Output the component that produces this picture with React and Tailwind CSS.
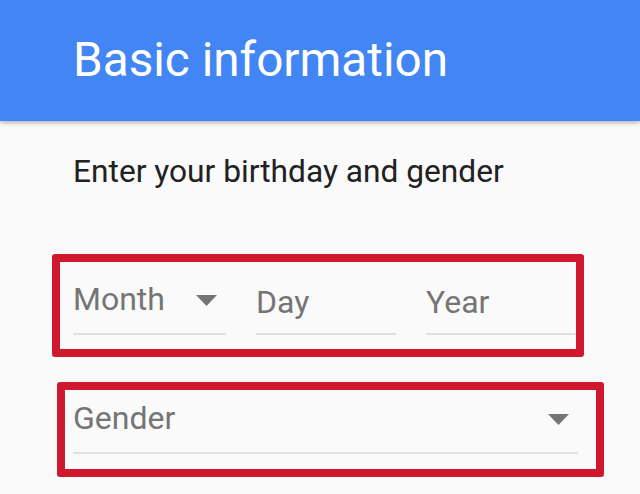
import React from 'react';

function Caret({ className }) {
  return (
    <svg viewBox="0 0 21 11" className={className}>
      <path d="M0 0 L21 0 L10.5 11 Z" fill="#757575" />
    </svg>
  );
}

// label area is 71px tall, underline sits right under it
function Field({ label, width, caret, labelTop }) {
  return (
    <div className={`flex flex-col shrink-0 ${width}`}>
      <div className="relative h-[71px]">
        <span className={`block text-[32px] text-[#757575] leading-none ${labelTop}`}>{label}</span>
        {caret && <Caret className="absolute right-[9px] top-[33px] w-[21px] h-[11px]" />}
      </div>
      <div className="h-[2px] bg-[#e0e0e0]" />
    </div>
  );
}

export default function App() {
  return (
    <div className="w-[640px] h-[494px] overflow-hidden bg-[#fafafa]" style={{ fontFamily: 'Roboto, "Noto Sans", sans-serif' }}>
      <header className="relative z-10 h-[121px] bg-[#4285f4] shadow-[0_2px_4px_rgba(0,0,0,0.28)] pl-[73px] pt-[37px]">
        <h1 className="text-[47.7px] text-white leading-none">Basic information</h1>
      </header>

      <main className="pt-[35px]">
        <p className="ml-[73px] text-[31.7px] text-[#212121] leading-none">Enter your birthday and gender</p>

        {/* Birthday row */}
        <div className="mt-[66px] ml-[52px] w-[532px] h-[103px] border-[8px] border-[#d0192f] rounded-[3px] pl-[13px] overflow-hidden">
          <div className="flex gap-[30px]">
            <Field label="Month" width="w-[153px]" labelTop="pt-[21px]" caret />
            <Field label="Day" width="w-[140px]" labelTop="pt-[24px]" />
            <Field label="Year" width="w-[152px]" labelTop="pt-[24px]" />
          </div>
        </div>

        {/* Gender row */}
        <div className="mt-[25px] ml-[57px] w-[547px] h-[95px] border-[8px] border-[#d0192f] rounded-[3px] pl-[8px] pr-[18px]">
          <div className="relative h-[62px]">
            <span className="block pt-[12px] text-[32px] text-[#757575] leading-none">Gender</span>
            <Caret className="absolute right-[9px] top-[24px] w-[21px] h-[11px]" />
          </div>
          <div className="h-[2px] bg-[#e0e0e0]" />
        </div>
      </main>
    </div>
  );
}
